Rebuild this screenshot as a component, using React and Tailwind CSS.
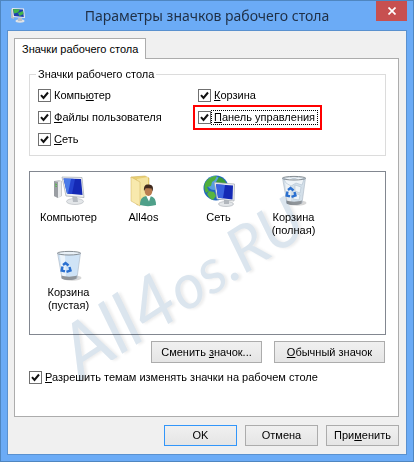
import React from "react";

const ListIcon = ({ children }) => (
  <svg viewBox="0 0 32 32" className="h-8 w-8" aria-hidden="true">
    {children}
  </svg>
);

const ComputerIcon = () => (
  <ListIcon>
    <path d="M1 6l5-1 3 1v15l-4 2-4-2z" fill="#c9cccf" />
    <path d="M1 6l4 1v16l-4-2z" fill="#9a9ea3" />
    <path d="M5 7l3-1v15l-3 2z" fill="#e8eaec" />
    <path d="M2 9l2 .5M2 11l2 .5" stroke="#54b64a" strokeWidth="1" />
    <ellipse cx="22" cy="26.500" rx="8.500" ry="3" fill="#e3e6e9" stroke="#aeb3b8" strokeWidth=".6" />
    <path d="M19 20l5 1 1 6h-5z" fill="#b6bbc1" />
    <path d="M9 2l20 .5 2 20-18-1.500z" fill="#eef0f2" stroke="#a5aab0" strokeWidth=".7" />
    <path d="M10.500 3.500l17.500.5 1.500 16-15.500-1.500z" fill="#1429b5" />
    <path d="M10.500 3.500l10 .3-5 14.700H14z" fill="#4a7be8" />
    <path d="M18 4l4 0-3 15-4-.4z" fill="#2443cf" />
  </ListIcon>
);

const UserFolderIcon = () => (
  <ListIcon>
    <path d="M3 2l14-1 4 2v24l-12 3z" fill="#e9cf74" stroke="#c9a848" strokeWidth=".5" />
    <path d="M9 4l11-2v24l-10 3z" fill="#f4e3a0" />
    <path d="M3 2l9 5v24l-9-5z" fill="#f8e9ad" stroke="#d0b05a" strokeWidth=".5" />
    <path d="M12 30c0-7 3-9 8-9s8 2 8 9c-5 1.500-11 1.500-16 0z" fill="#4fa08a" />
    <path d="M18 20.500h5l-2 6z" fill="#fff" />
    <ellipse cx="20.500" cy="16" rx="3.800" ry="5" fill="#b97c50" />
    <path d="M16 16c-.5-6 2-7 5-6.500s5 2 3.500 7l-1-3c-3 0-5-.5-6 0z" fill="#40291d" />
  </ListIcon>
);

const NetworkIcon = () => (
  <ListIcon>
    <circle cx="13" cy="13" r="12.500" fill="#2267bd" />
    <circle cx="11" cy="8" r="7" fill="#6fb6ee" opacity=".7" />
    <path d="M2 8c3-5 7-7 12-7l-2 4-3 2-1 4-4 1 2 4-3 2c-2-3-2-7-1-10z" fill="#4fae3c" />
    <path d="M16 2c4 1 7 4 8 8l-5-1-4 2-2-4z" fill="#3b9c36" />
    <path d="M6 16l5 1 2 4-3 4c-3-1-5-4-6-6z" fill="#57b53f" />
    <ellipse cx="23" cy="29" rx="7.500" ry="2.500" fill="#e3e6e9" stroke="#a5aab0" strokeWidth=".6" />
    <path d="M21 24l5 1v4h-5z" fill="#b1b6bc" />
    <path d="M11.500 7.500l20 1.500-.5 17-17-2z" fill="#eef0f2" stroke="#a5aab0" strokeWidth=".7" />
    <path d="M13 9.200l17 1.300-.5 14-14.500-1.800z" fill="#1429b5" />
    <path d="M13 9.200l9 .8-2 13.200-5-.5z" fill="#3a63df" />
  </ListIcon>
);

const BinIcon = ({ full }) => (
  <ListIcon>
    <ellipse cx="19" cy="28" rx="9.500" ry="2.700" fill="#c4c4c4" opacity=".7" />
    <path d="M4.500 3h23l-3.500 25c-4 2-11 2-15 0z" fill={full ? "#d3dfe9" : "#cfe3f6"} stroke="#a9b6c2" strokeWidth=".6" />
    <path d="M7 5h5l1 23-4-.5z" fill="#fff" opacity=".6" />
    {full && (
      <g fill="#eff4f8" stroke="#a8bacb" strokeWidth=".5">
        <path d="M6 4l5-2 5 2 5-2 5 2-2 6-6-2-5 3-5-3z" />
        <path d="M17 10l6 2-1 6-5-2zM16 18l6 2-1 5-6-1z" />
      </g>
    )}
    <path d="M8.500 25.500c4 1.500 11 1.500 15.500 0l-.5 3c-4 2-11 2-15 0z" fill="#8f9499" />
    <ellipse cx="16" cy="3.200" rx="11.500" ry="1.800" fill={full ? "none" : "#e9f1f8"} stroke="#7b8289" strokeWidth=".9" />
    <g fill="none" stroke="#2b70d0" strokeWidth="2.400">
      <path d="M10 15l2.500-2 3 2.500" />
      <path d="M9.500 16.500l-.8 4 3.300.8" />
      <path d="M16.500 17l1 3.500-4 1.300" />
    </g>
  </ListIcon>
);

const Check = ({ children, label = "" }) => (
  <label className="flex items-center gap-px whitespace-nowrap">
    <span className="relative flex h-[13px] w-[13px]">
      <input
        type="checkbox"
        defaultChecked
        className="h-[13px] w-[13px] appearance-none border border-[#707070] bg-white"
      />
      <svg viewBox="0 0 13 13" className="pointer-events-none absolute inset-0" aria-hidden="true">
        <path d="M3 6.200L5.500 9 10 3.500" fill="none" stroke="#111" strokeWidth="2" />
      </svg>
    </span>
    <span className={`px-[2px] ${label}`}>{children}</span>
  </label>
);

const PushButton = ({ children, className }) => (
  <button
    type="button"
    className={`border border-solid bg-linear-to-b from-[#f0f0f0] to-[#e5e5e5] whitespace-nowrap ${className}`}
  >
    {children}
  </button>
);

const desktopIcons = [
  { name: ["Компьютер"], icon: <ComputerIcon /> },
  { name: ["All4os"], icon: <UserFolderIcon /> },
  { name: ["Сеть"], icon: <NetworkIcon /> },
  { name: ["Корзина", "(полная)"], icon: <BinIcon full /> },
  { name: ["Корзина", "(пустая)"], icon: <BinIcon /> },
];

const App = () => {
  return (
    <div className="border border-[#4f86c0] bg-[#6babf6] px-[6px] pb-[6px] font-['Liberation_Sans',Arial,sans-serif] text-[11px] leading-[13px] text-black">
      <header className="flex h-[29px] items-start">
        <svg viewBox="0 0 16 16" className="mt-[6px] ml-[3px] h-4 w-4" aria-hidden="true">
          <path d="M1 2l3-1v11l-3-1z" fill="#b8bec4" />
          <path d="M2 1l12 .5 1 9.500L3 10z" fill="#e6e9ec" />
          <path d="M3 2l10 .5.800 7.500L4 9z" fill="#1d3fae" />
          <path d="M3 2l7 .4-2 3-4 1zM8 6l5-2 .5 3-4 2z" fill="#41b649" />
          <ellipse cx="10" cy="14" rx="4.500" ry="1.700" fill="#dfe2e6" />
          <path d="M8 11h4v3H8z" fill="#b9bec4" />
        </svg>
        <h1 className="flex-1 pt-[4px] pl-[12px] text-center font-['Noto_Sans',sans-serif] text-[14px] leading-[22px] text-[#1f2f45]">
          Параметры значков рабочего стола
        </h1>
        <button type="button" aria-label="Закрыть" className="flex h-5 w-[31px] items-center justify-center bg-[#c75050]">
          <svg viewBox="0 0 8 8" className="h-2 w-2" aria-hidden="true">
            <path d="M.5.5l7 7M7.500.5l-7 7" stroke="#fff" strokeWidth="1.700" />
          </svg>
        </button>
      </header>

      <main className="relative border border-[#5a91cf] bg-[#f0f0f0] pt-[7px] pr-[7px] pb-2 pl-[6px]">
        <div role="tablist" className="flex">
          <button
            type="button"
            role="tab"
            aria-selected="true"
            className="relative z-10 -mb-px h-[21px] border border-b-0 border-[#acacac] bg-white px-[7px]"
          >
            Значки рабочего стола
          </button>
        </div>

        <section className="border border-[#acacac] bg-white pt-[9px] pr-3 pb-[32px] pl-[14px]">
          <fieldset className="h-[88px] border border-[#dcdcdc] px-2">
            <legend className="-ml-[2px] px-[2px]">Значки рабочего стола</legend>
            <div className="grid grid-cols-[160px_1fr] pt-1">
              <div className="flex flex-col gap-[9px] pt-1">
                <Check>Компь<u>ю</u>тер</Check>
                <Check><u>Ф</u>айлы пользователя</Check>
                <Check><u>С</u>еть</Check>
              </div>
              <div className="flex flex-col items-start gap-[3px] pt-1">
                <Check><u>К</u>орзина</Check>
                <div className="-ml-[5px] border-2 border-[#ff0000] px-[3px] py-[4px]">
                  <Check label="outline-1 outline-dotted outline-black"><u>П</u>анель управления</Check>
                </div>
              </div>
            </div>
          </fieldset>

          <ul className="mt-[15px] flex h-[164px] flex-wrap content-start gap-y-2 border border-[#828790] px-px pt-[3px]">
            {desktopIcons.map((item) => (
              <li key={item.name.join(" ")} className="flex h-[67px] w-[75px] flex-col items-center text-center">
                {item.icon}
                <span className="mt-1">
                  {item.name.map((line) => (
                    <span key={line} className="block">{line}</span>
                  ))}
                </span>
              </li>
            ))}
          </ul>

          <div className="mt-[6px] flex justify-end gap-3 pr-px">
            <PushButton className="h-[22px] w-[111px] border-[#acacac]">Сменить <u>з</u>начок...</PushButton>
            <PushButton className="h-[22px] w-[111px] border-[#acacac]"><u>О</u>бычный значок</PushButton>
          </div>

          <div className="mt-2">
            <Check><u>Р</u>азрешить темам изменять значки на рабочем столе</Check>
          </div>
        </section>

        <div className="mt-2 flex justify-end gap-2">
          <PushButton className="h-[21px] w-[73px] border-[#3296fa]">OK</PushButton>
          <PushButton className="h-[21px] w-[73px] border-[#acacac]">Отмена</PushButton>
          <PushButton className="h-[21px] w-[73px] border-[#acacac]">При<u>м</u>енить</PushButton>
        </div>

        <span className="pointer-events-none absolute bottom-[66px] left-[78px] origin-bottom-left -rotate-33 font-['Lato',sans-serif] text-[62px] leading-none italic whitespace-nowrap text-[#dbe5ee] mix-blend-multiply [text-shadow:2px_2px_3px_#00000014]">
          <span className="text-[74px] leading-none">All4</span>os.RU
        </span>
      </main>
    </div>
  );
};

export default App;
